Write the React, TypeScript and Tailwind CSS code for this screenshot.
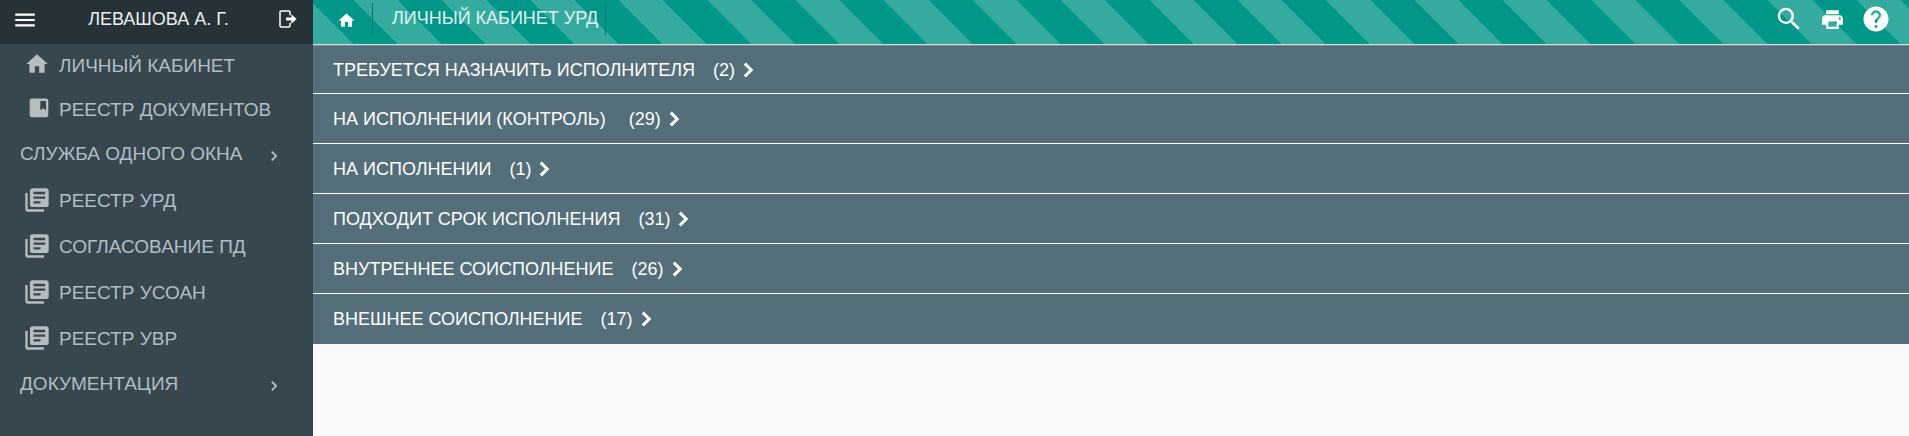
import type { ReactNode } from "react";
import {
  MdChevronRight,
  MdHelp,
  MdHome,
  MdLibraryBooks,
  MdMenu,
  MdPrint,
  MdSearch,
} from "react-icons/md";

function BookIcon() {
  return (
    <svg viewBox="0 0 20 20" className="mb-1 ml-1 size-5 text-[#b7bcc0]" fill="currentColor" aria-hidden="true">
      <path
        fillRule="evenodd"
        d="M3 0.5H17A2.3 2.3 0 0 1 19.3 2.8V17A2.3 2.3 0 0 1 17 19.3H3A2.3 2.3 0 0 1 0.7 17V2.8A2.3 2.3 0 0 1 3 0.5ZM11.3 3V12.2L14.2 10.2L17 12.2V3Z"
      />
    </svg>
  );
}

function ExitIcon() {
  return (
    <svg viewBox="0 0 18 18" className="size-[18px]" aria-hidden="true">
      <path
        d="M11 5.2V2.2Q11 1 9.8 1H2.2Q1 1 1 2.2V15.8Q1 17 2.2 17H9.8Q11 17 11 15.8V12.8"
        fill="none"
        stroke="currentColor"
        strokeWidth="1.5"
      />
      <path d="M7 7.4H12.4V4.3L17.6 9L12.4 13.7V10.6H7Z" fill="currentColor" />
    </svg>
  );
}

function BoldChevron() {
  return (
    <svg viewBox="0 0 11 16" className="h-4 w-[11px]" aria-hidden="true">
      <path d="M1.8 1.6L8.2 8L1.8 14.4" fill="none" stroke="currentColor" strokeWidth="3" />
    </svg>
  );
}

function NavItem({ icon, label }: { icon: ReactNode; label: string }) {
  return (
    <a href="#" className="flex h-full items-center">
      <span className="flex w-[33px] shrink-0 items-center justify-center">{icon}</span>
      <span className="pl-1.5 whitespace-nowrap">{label}</span>
    </a>
  );
}

function NavGroup({ label }: { label: string }) {
  return (
    <button type="button" className="flex h-11 w-full items-center justify-between pr-[29px]">
      <span>{label}</span>
      <MdChevronRight className="mt-1 size-5 text-[#c0c6c9]" />
    </button>
  );
}

const registries = ["РЕЕСТР УРД", "СОГЛАСОВАНИЕ ПД", "РЕЕСТР УСОАН", "РЕЕСТР УВР"];

const sections = [
  { title: "ТРЕБУЕТСЯ НАЗНАЧИТЬ ИСПОЛНИТЕЛЯ", count: 2 },
  { title: "НА ИСПОЛНЕНИИ (КОНТРОЛЬ) ", count: 29 },
  { title: "НА ИСПОЛНЕНИИ", count: 1 },
  { title: "ПОДХОДИТ СРОК ИСПОЛНЕНИЯ", count: 31 },
  { title: "ВНУТРЕННЕЕ СОИСПОЛНЕНИЕ", count: 26 },
  { title: "ВНЕШНЕЕ СОИСПОЛНЕНИЕ", count: 17 },
];

export default function App() {
  return (
    <div className="flex min-h-screen bg-[#fafafa] font-['Liberation_Sans',Arial,sans-serif] text-lg leading-6">
      <aside className="flex w-[313px] shrink-0 flex-col bg-[#37474f] text-[#b0bec5]">
        <div className="flex h-11 items-center justify-between bg-[#263238] pr-4 pl-3 pb-1.5 text-white">
          <button type="button" aria-label="Меню" className="pt-0.5">
            <MdMenu className="size-[26px]" />
          </button>
          <span className="text-[#eceff1]">ЛЕВАШОВА А. Г.</span>
          <button type="button" aria-label="Выход">
            <ExitIcon />
          </button>
        </div>
        <nav className="pl-5 text-[19px]">
          <ul>
            <li className="h-11">
              <NavItem icon={<MdHome className="mb-1 size-[26px] text-[#b7bcc0]" />} label="ЛИЧНЫЙ КАБИНЕТ" />
            </li>
            <li className="h-11">
              <NavItem icon={<BookIcon />} label="РЕЕСТР ДОКУМЕНТОВ" />
            </li>
          </ul>
          <NavGroup label="СЛУЖБА ОДНОГО ОКНА" />
          <ul className="pt-0.5">
            {registries.map((label) => (
              <li key={label} className="h-[46px]">
                <NavItem icon={<MdLibraryBooks className="mb-0.5 size-7 text-[#b7bcc0]" />} label={label} />
              </li>
            ))}
          </ul>
          <NavGroup label="ДОКУМЕНТАЦИЯ" />
        </nav>
      </aside>

      <main className="min-w-0 flex-1">
        <header className="flex h-11 items-center justify-between bg-[repeating-linear-gradient(45deg,#35aba0_0%,#35aba0_5%,#009688_5%,#009688_10%)] bg-[length:442px_442px] bg-[position:-4px_100%] pr-[18px] pb-1.5 text-white">
          <div className="flex h-8 items-center">
            <a href="#" aria-label="Главная" className="flex h-8 w-[60px] items-center justify-center border-r border-[#00796b] pt-0.5 pl-2">
              <MdHome className="size-[19px]" />
            </a>
            <a href="#" className="flex h-8 items-center border-r border-[#00796b] pr-[7px] pb-0.5 pl-[19px] text-[#e0f2f1]">
              ЛИЧНЫЙ КАБИНЕТ УРД
            </a>
          </div>
          <div className="flex items-center gap-4">
            <button type="button" aria-label="Поиск">
              <MdSearch className="size-[30px]" />
            </button>
            <button type="button" aria-label="Печать">
              <MdPrint className="size-[25px]" />
            </button>
            <button type="button" aria-label="Справка">
              <MdHelp className="size-[30px]" />
            </button>
          </div>
        </header>
        <ul className="border-t border-[#d6dcdf] bg-[#546e7a] pb-px text-white">
          {sections.map(({ title, count }) => (
            <li key={title} className="group border-t border-white first:border-[#7b8b93]">
              <button type="button" className="flex h-[49px] w-full items-center pl-5 group-first:h-[47px]">
                <span className="whitespace-pre">{title}</span>
                <span className="pl-[18px]">({count})</span>
                <span className="pl-2">
                  <BoldChevron />
                </span>
              </button>
            </li>
          ))}
        </ul>
      </main>
    </div>
  );
}
